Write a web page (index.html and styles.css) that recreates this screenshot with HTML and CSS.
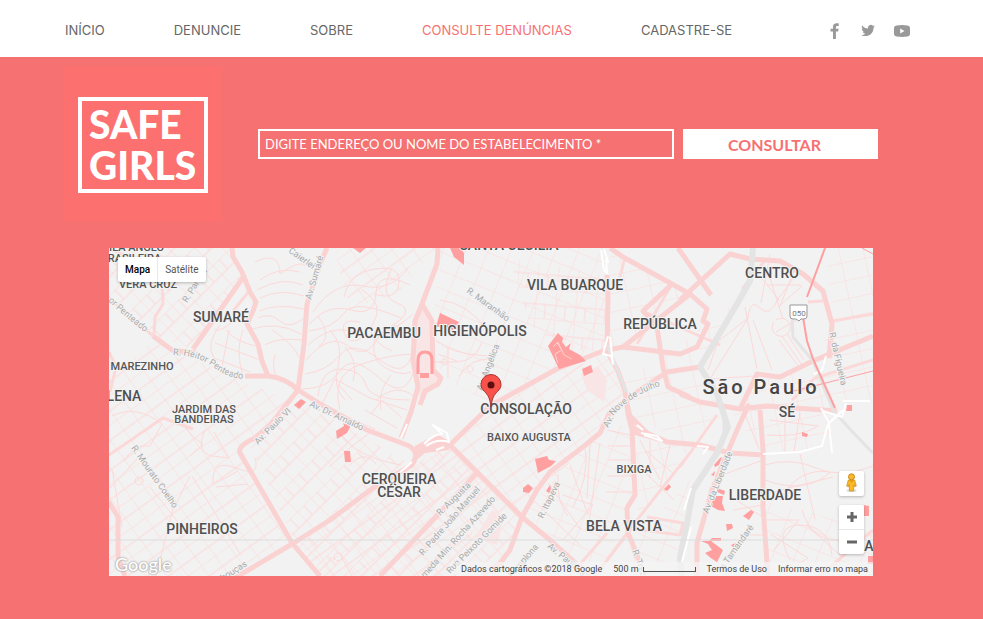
FILE: index.html
```html
<!DOCTYPE html>
<html lang="pt-BR">
<head>
<meta charset="utf-8">
<meta name="viewport" content="width=device-width, initial-scale=1">
<title>Safe Girls</title>
<link rel="stylesheet" href="styles.css">
</head>
<body>
<header class="topbar">
  <nav class="menu">
    <a href="#">INÍCIO</a>
    <a href="#">DENUNCIE</a>
    <a href="#">SOBRE</a>
    <a href="#" class="current" aria-current="page">CONSULTE DENÚNCIAS</a>
    <a href="#">CADASTRE-SE</a>
  </nav>
  <div class="social">
    <a href="#" aria-label="Facebook"><svg width="20" height="20" viewBox="0 0 20 20"><path d="M9 18v-7.500H6.500V7.800H9V6c0-2.700 1.400-3.800 3.700-3.800h2V5h-1.500c-1 0-1.300.400-1.300 1.300v1.500h2.700l-.400 2.700h-2.300V18z"/></svg></a>
    <a href="#" aria-label="Twitter"><svg width="20" height="20" viewBox="0 0 20 20"><path d="M17 5.200c-.5.250-1 .400-1.600.450.600-.350 1-.900 1.200-1.500-.550.300-1.100.500-1.750.650A2.850 2.850 0 0 0 10 7.400C7.700 7.300 5.600 6.200 4.200 4.400c-.8 1.400-.3 3 .85 3.800-.450 0-.900-.150-1.300-.350 0 1.400 1 2.500 2.300 2.800-.4.100-.85.100-1.300.05.350 1.100 1.400 1.900 2.650 1.950A5.700 5.700 0 0 1 3.200 13.900c4.600 2.900 12.300.4 12.300-7.200.600-.400 1.100-.9 1.500-1.500z"/></svg></a>
    <a href="#" aria-label="YouTube"><svg width="20" height="20" viewBox="0 0 20 20"><path fill-rule="evenodd" d="M4.500 4.500Q10 3.600 15.500 4.500 18 4.800 18 7v6q0 2.200-2.500 2.500-5.500.9-11 0Q2 15.200 2 13V7q0-2.200 2.500-2.500zM8.200 7.500v5l4.300-2.500z"/></svg></a>
  </div>
</header>

<main class="page">
  <section class="lookup">
    <a href="#" class="logo"><span class="frame">SAFE<br>GIRLS</span></a>
    <form class="search">
      <input type="text" aria-label="Endereço ou nome do estabelecimento" placeholder="DIGITE ENDEREÇO OU NOME DO ESTABELECIMENTO *">
      <button type="button">CONSULTAR</button>
    </form>
  </section>

  <section class="map" aria-label="Mapa">
    <svg class="canvas" viewBox="109 248 764 328" preserveAspectRatio="xMidYMid slice">
      <defs>
        <pattern id="gridA" width="17" height="24" patternUnits="userSpaceOnUse" patternTransform="rotate(-36)"><path d="M0 0H17M0 0V24M0 13H17"/></pattern>
        <pattern id="gridB" width="19" height="26" patternUnits="userSpaceOnUse" patternTransform="rotate(-45)"><path d="M0 0H19M0 0V26M9 0V13M0 13H19"/></pattern>
        <pattern id="gridC" width="20" height="30" patternUnits="userSpaceOnUse" patternTransform="rotate(5)"><path d="M0 0H20M0 0V30M0 16H20M10 16V30"/></pattern>
        <pattern id="gridD" width="21" height="17" patternUnits="userSpaceOnUse" patternTransform="rotate(22)"><path d="M0 0H21M0 0V17"/></pattern>
        <pattern id="gridE" width="24" height="18" patternUnits="userSpaceOnUse" patternTransform="rotate(-12)"><path d="M0 0H24M0 0V18"/></pattern>
        <path id="heitor" d="M173 355Q199 355 216 369 231 380 252 379"/>
        <path id="penteado" d="M108 301Q124 316 150 336"/>
        <path id="nove" d="M613 416Q630 395 668 383"/>
      </defs>

      <rect class="land" x="0" y="0" width="983" height="619"/>

      <g>
        <path fill="url(#gridB)" d="M109 248H230L245 276 193 349 153 336 109 298z"/>
        <path fill="url(#gridA)" d="M109 380L153 340 230 376 290 400 240 453 292 543 240 576H109z"/>
        <path fill="url(#gridA)" d="M334 248H436L400 290 350 310z"/>
        <path fill="url(#gridB)" d="M250 445L300 400 412 465 450 445 522 517 500 576H320L300 553z"/>
        <path fill="url(#gridA)" d="M300 543L412 467 450 445 500 497 440 576H320z"/>
        <path fill="url(#gridD)" d="M440 248H607V350L490 402 441 378 433 321z"/>
        <path fill="url(#gridC)" d="M510 258L606 275V350L570 350 530 325z"/>
        <path fill="url(#gridA)" d="M490 404L607 353 625 400 583 447 522 517 452 445z"/>
        <path fill="url(#gridD)" d="M522 517L583 447 630 420 635 495 600 576H590z"/>
        <path fill="url(#gridE)" d="M636 437L690 447 637 520zM610 252L690 294 640 335 608 350z"/>
        <path fill="url(#gridE)" d="M660 357L740 300 700 367 720 410 690 445 630 415 620 380z"/>
        <path fill="url(#gridE)" d="M825 248H873V400L835 405 813 361 833 321zM730 410L757 380 815 370 835 411 825 450 763 452z"/>
        <path fill="url(#gridD)" d="M640 530L690 480 680 576H610zM766 500L873 530V576H768z"/>
      </g>

      <g class="minor">
        <path d="M255 262q25-12 25 12 20-15 25-8M260 280q18-14 40-8M257 290q25-14 46-5M260 298q20-10 44-2M259 311q18-8 45-2M258 318q12-6 22 3t24-3M249 330q28-10 52 4M220 325q-15 20-6 33l36 14M238 316q-14 16-24 14M226 330q10 12 30 16M215 343l48 18M243 330q-8 20 0 46M229 330l-8 42M265 345q13-8 37-5M275 355q-4 14 3 23M272 330q20 12 29 30"/>
        <path d="M313 312q22-32 50-26t45-18M309 325q18-22 42-15t25-17 34-8M309 331q25-3 35-18t57 5M308 345q24-22 48-12t57-19M306 360q24-28 42-14t30-8 35-4M305 374q22-3 35-19t40 5 33-10M302 389q26 0 38-18t38 6 35-4M318 396q4-28 24-27t24 16 44 15M340 410q-9-35 19-45t53-11M322 404l13-25 35 19 37 12M330 330q14 15 8 36t7 34M362 290q22 14 12 31t18 30M392 268q-14 28 5 35t-4 22 20 12M377 329q-9 28 7 38t27 5M318 316q15 22 1 30M345 347q14 15 8 34M352 400l-14-16M391 375q-14 17-10 35"/>
        <path d="M344 297q5-24 31-28t24 14-25 11M360 322q-20-4-16 10t18 6"/>
        <path d="M440 300q28 3 48 31M436 340q14 14 51 16M438 354l19 7M448 347v31M433 362h25q18-2 24-20M470 366a3 3 0 1 0 .1 0M444 359a3 3 0 1 0 .1 0M459 377q10-20 35-18"/>
        <path d="M720 340l28-22q2-20 12-10t18-9l15-20M748 318l-38 61 60-4M753 320l19 50M778 307l24-21M780 301l-28-35M769 275l14 44M776 332l24-14M782 336l20 29M779 340l20 27M787 334l17 26M774 322a9 9 0 1 0 2-2M767 285h34M770 254l-9 49M796 266l-16 40M745 307l12 62M722 330l-14 40"/>
        <path d="M124 461q10-18 26-15l12-22q-26-20-50-8M110 488l29-31 36 44-19 75M122 527l-10-58M139 477a4 4 0 1 0 .1 0M150 487l28 35M178 410q9 26 25 34l-13 12M190 476l-15 30M192 476l49 79M213 484q-2-26 23-16t19-10M214 484l24-13M216 487l32-3M205 430q-10 22 7 26l17 2-15-26"/>
        <path d="M376 400q21-18 39-3M365 410l32 18M371 414l11-14 20 18M340 415l35 14q-24 16-46 38M350 465q14-16 26-1M342 435q14 22 59 30M338 553a4 4 0 1 0 .1 0M342 558l10 18M332 557l-16 19"/>
        <path d="M585 447q5 30-12 60M590 445l-3 53M600 443l-11 79M570 465l18 50M558 474q-2 28 10 42M548 483l33 47M535 502l45 43M640 440l20 40M650 440v38M670 445l-10 42M645 450l30 25M640 468l34 32M563 495l30 10-30 35M607 430l23 5M608 446h22M608 460h24M607 476h26M606 492h26"/>
        <path d="M764 465q28-8 52 3t57-2M765 480q40 15 66-8M765 494l68-17M800 454l15 65M780 500q18-33 50-28M802 510q10 35 47 30M790 560q-18-35 10-35t32 30M770 534l38 24-30 18M806 525l34 30M766 520h33l-25 30M725 474l38-14M733 510l30-5M740 535h26M736 500l30 19M745 414l14 35M770 420l49 6M767 435q30 3 50-8M785 412v40M800 412l-6 40"/>
      </g>

      <path class="block" d="M422 304L415 321 413 361 418 387 421 404 430 390 438 384 441 378 433 370 433 321zM581 374l17-8 9 14-3 22-17-12zM492 510l12 7-7 28-22-7z"/>

      <g class="mid">
        <path d="M109 298L153 336M162 282L163 304 155 317 154 334M109 352L116 367 110 392M250 290L233 311M155 270L109 248M109 455L163 418 193 429M643 311L720 345M620 277L625 257M833 321L873 314M808 302L823 301M680 467L717 415M647 517L683 523 680 535 643 530M607 533L570 576M690 453L637 520 607 560M477 473L450 445M637 344L672 284M628 533L595 576M792 400L815 378 873 360M764 262L742 289M820 576L873 530"/>
      </g>

      <g class="major">
        <path d="M232 248L233 257 242 272 250 292 256 302 253 311 247 324 258 344 262 361 268 376"/>
        <path d="M244 276L193 349"/>
        <path d="M153 336L172 350 195 353M245 376H268Q286 378 298 390L322 405 367 430 407 445Q421 451 412 465L373 488 330 520 292 544 235 578"/>
        <path d="M327 248L320 264 307 304 304 344 298 390 270 425 255 438Q237 446 240 453L292 543 320 576"/>
        <path d="M438 248L437 264 422 304 415 321 413 361 418 387 411 412 401 438"/>
        <path d="M422 304L432 321 433 370 441 378 438 384 425 391 420 405"/>
        <path d="M415 448L427 450 450 445 490 406 517 391 557 369 603 351 623 347 690 294"/>
        <path d="M450 445L522 517 550 540 590 576"/>
        <path d="M477 473L380 576"/>
        <path d="M700 367L667 372 640 390 620 405 610 412 600 433 583 447 550 472 537 490 522 517 510 550 500 563 482 575"/>
        <path d="M607 275L608 297 607 351 618 371 625 391 628 414 632 430 635 495 627 508 628 533 633 545 645 576"/>
        <path d="M628 414L647 433 667 442 700 445 730 453 763 455"/>
        <path d="M610 248L623 257 690 294 707 309 703 321 708 324 697 347 680 354 623 347M678 248L711 295"/>
        <path d="M680 300L730 254 750 259 780 261 803 274 823 291 832 324 829 358"/>
        <path d="M672 284L643 311 657 327 663 367 668 387 690 397"/>
        <path d="M680 394L700 402 740 409 757 374 780 377 813 361 873 336"/>
        <path d="M740 409L767 406 837 411M749 404L737 430 712 490 697 543 697 576M760 410L763 450 763 507 768 576"/>
        <path d="M109 502L118 517 118 557 125 576"/>
      </g>
      <path class="junction" d="M415 446L437 434 449 441 449 450 425 453 413 463zM628 398l7 28 25 16-29-8z"/>

      <g class="river">
        <path d="M753 248L750 281 737 304 700 367 717 394 728 427 717 453 693 490 687 523 680 557 682 576"/>
        <path class="thin" d="M792 317L793 337 813 361 833 410Q850 430 873 453"/>
        <path class="thin" d="M724 412v20M607 345L618 371 626 392"/>
      </g>
      <g class="ramp">
        <path d="M601 250l3 20 3 3-1-13 2 2-4-13M608 336l-5 18 8 2 2 8-3-27M398 474l14-12M401 438l6-14M763 454l37-2 22-6 6-22 15-14M821 408l8 15 3 30M823 411l19 6 4-14M697 446l11 1-5 7M826 356l-4 14-8 4M843 401l27 0M637 425l6 5M641 433l16 3 5 5-18-6M684 510l7-22M682 562l9-35"/>
        <path d="M424 444q10-10 18-10l-9-9 14 8 2 9q-12-4-23 4M436 450l8-3"/>
      </g>
      <path class="highway" d="M825 248L807 297M803 317L807 341 813 359 835 408"/>
      <path class="highway thin" d="M794 391L873 371M862 248L873 254"/>

      <g class="park">
        <path d="M353 248h13l-6 5zM450 248h10l4 5v12l-10-8zM440 313l19 9-6 8q-8-4-17-3zM548 346l10-13 5 5-1 4 4 5 5-4-2 6 11 6 6 6-14 4-13 4zM582 369l9-4 2 7-9 4zM294 405l7-6 5 3-7 7zM336 431l8-5-1-4h7v5l-3 6-10 6zM344 451h6l1 11h-6zM535 459l12-3 2 4 7 1-5 5-13 7zM523 488l5-4 5 4-4 5-6-1zM546 491l4-6 2 7-3 1zM664 489l5-5 2 3-4 4-2-1zM802 432l6 2-1 3-5-1zM847 405h5v6h-6zM714 465l6-7 2-1-3 8-4 2zM711 475l4-4-1 5zM717 488l8 3-1 4-7-3zM711 506l3-10h9l-1 7 3 8-7-1zM743 516l8-6 3 2-5 8zM726 524h6l1 4-6 3zM701 541h8l3-3h9v3h-10l12 9-6 12q-7-4-12-9l7-3-4-6zM731 545l5-2-2 5zM864 505l5 1v10h-5zM868 556h5v8h-5z"/>
        <path class="stadium" d="M418 374V360q0-8 7-8t7 8V374"/>
        <path d="M420 373h9v5h-9z"/>
        <path class="lane" d="M553 347l5-5 6 13 8 4M557 343l5 7-7 4 3 9"/>
      </g>
      <path class="tile" d="M109 540H873"/>

      <g class="street">
        <text><textPath href="#heitor">R. Heitor Penteado</textPath></text>
        <text><textPath href="#penteado">or Penteado</textPath></text>
        <text><textPath href="#nove">Nove de Julho</textPath></text>
        <text transform="translate(187 303) rotate(-58)">R. Paraná</text>
        <text transform="translate(311 300) rotate(-74)">Av. Sumaré</text>
        <text transform="translate(288 252) rotate(35)">Caierlei</text>
        <text transform="translate(466 292) rotate(36)">R. Maranhão</text>
        <text transform="translate(482 391) rotate(-69)">Av. Angélica</text>
        <text transform="translate(829 333) rotate(77)">R. da Figueira</text>
        <text transform="translate(131 448) rotate(55)">R. Mourato Coelho</text>
        <text transform="translate(258 445) rotate(-45)">Av. Paulo VI</text>
        <text transform="translate(309 406) rotate(25)">Av. Dr. Arnaldo</text>
        <text transform="translate(440 516) rotate(-44)">R. Augusta</text>
        <text transform="translate(423 556) rotate(-49)">R. Padre João Manuel</text>
        <text transform="translate(416 588) rotate(-48)">Alameda Min. Rocha Azevedo</text>
        <text transform="translate(450 574) rotate(-45)">Rua Peixoto Gomide</text>
        <text transform="translate(543 519) rotate(-64)">R. Itapeva</text>
        <text transform="translate(512 578) rotate(-49)">Pamplona</text>
        <text transform="translate(547 547) rotate(40)">Av. Paulista</text>
        <text transform="translate(608 428) rotate(-62)">Av.</text>
        <text transform="translate(632 551) rotate(70)">R. Treze</text>
        <text transform="translate(708 514) rotate(-68)">Av. da Liberdade</text>
        <text transform="translate(724 570) rotate(-55)">a Tamandaré</text>
        <text transform="translate(202 594) rotate(-32)">Av. Rebouças</text>
      </g>

      <g class="shield"><path d="M790 305h17v11q0 3-3 3h-3l-2 2-3-2h-3q-3 0-3-3z"/><text x="799" y="316">050</text></g>

      <g class="area">
        <text x="133" y="251">VILA ANGLO</text>
        <text x="131" y="262">BRASILEIRA</text>
        <text x="148" y="288">VERA CRUZ</text>
        <text x="142" y="370">MAREZINHO</text>
        <text x="204" y="413">JARDIM DAS</text>
        <text x="204" y="423">BANDEIRAS</text>
        <text x="529" y="441">BAIXO AUGUSTA</text>
        <text x="634" y="473">BIXIGA</text>
      </g>
      <g class="district">
        <text x="509" y="250">SANTA CECÍLIA</text>
        <text x="221" y="322">SUMARÉ</text>
        <text x="384" y="338">PACAEMBU</text>
        <text x="480" y="336">HIGIENÓPOLIS</text>
        <text x="575" y="290">VILA BUARQUE</text>
        <text x="660" y="329">REPÚBLICA</text>
        <text x="772" y="278">CENTRO</text>
        <text x="124" y="401">LENA</text>
        <text x="526" y="414">CONSOLAÇÃO</text>
        <text x="787" y="417">SÉ</text>
        <text x="399" y="484">CERQUEIRA</text>
        <text x="399" y="497">CÉSAR</text>
        <text x="202" y="534">PINHEIROS</text>
        <text x="624" y="531">BELA VISTA</text>
        <text x="765" y="500">LIBERDADE</text>
        <text x="869" y="551">A</text>
      </g>
      <text class="city" x="761" y="394">São Paulo</text>

      <g class="pin"><path d="M491 407C490 398 488 395 484.500 391.500 482 389 481 387 481 384.500a10 10 0 0 1 20 0C501 387 500 389 497.500 391.500 494 395 492 398 491 407z"/><circle cx="491" cy="385" r="3.500"/></g>
    </svg>

    <div class="maptype">
      <button type="button" class="on">Mapa</button>
      <button type="button">Satélite</button>
    </div>

    <div class="controls">
      <button type="button" class="pegman" aria-label="Street View"><svg width="25" height="25" viewBox="0 0 25 25"><ellipse cx="12.500" cy="19.500" rx="5" ry="1.500" fill="#ddd"/><circle cx="12.500" cy="5.800" r="3" fill="#fbb829" stroke="#c98a1b"/><path d="M9.300 9h6.400l1.600 6-1.600.7-.7-2-.5 6.300h-4l-.5-6.300-.7 2-1.600-.7z" fill="#fbb829" stroke="#c98a1b" stroke-width=".7"/><path d="M10 9l2.500 3L15 9z" fill="#e79a16"/></svg></button>
      <div class="zoom">
        <button type="button" aria-label="Aumentar o zoom"><svg width="25" height="24" viewBox="0 0 25 24"><path d="M8 12h10M13 7v10"/></svg></button>
        <button type="button" aria-label="Diminuir o zoom"><svg width="25" height="24" viewBox="0 0 25 24"><path d="M8 12h10"/></svg></button>
      </div>
    </div>

    <span class="brand">Google</span>
    <footer class="credits">
      <span>Dados cartográficos ©2018 Google</span>
      <span class="scale">500 m <i></i></span>
      <a href="#">Termos de Uso</a>
      <a href="#">Informar erro no mapa</a>
    </footer>
  </section>
</main>
</body>
</html>
```

FILE: styles.css
```css
* { box-sizing: border-box; }

body {
  margin: 0;
  min-height: 100vh;
  display: flex;
  flex-direction: column;
  background: #f67171;
  font-family: Lato, sans-serif;
}

a { color: inherit; text-decoration: none; }
button { border: 0; padding: 0; font: inherit; cursor: pointer; }

.topbar {
  display: flex;
  align-items: center;
  justify-content: space-between;
  min-height: 57px;
  padding: 4px 71px 0 65px;
  background: #fff;
}
.menu {
  display: flex;
  gap: 69px;
  padding-bottom: 2px;
  color: #666;
  font: 400 13px/20px Inter, sans-serif;
  white-space: nowrap;
}
.menu .current { color: #f67171; }
.social { display: flex; gap: 14px; }
.social svg { display: block; fill: #999; }

.page { flex: 1; padding-bottom: 43px; }

.lookup {
  display: flex;
  align-items: center;
  gap: 36px;
  padding: 9px 105px 0 64px;
}
.logo {
  flex: none;
  padding: 31px 14px 29px;
  background: #fd7070;
}
.frame {
  display: block;
  width: 130px;
  padding: 3px 0 3px 7px;
  border: 4px solid #fff;
  color: #fff;
  font: 900 39px/41px Lato, sans-serif;
}
.search { flex: 1; display: flex; gap: 9px; }
.search input {
  flex: 1;
  min-width: 0;
  height: 30px;
  padding: 0 5px;
  border: 2px solid #fff;
  border-radius: 0;
  background: transparent;
  color: #fff;
  font: 13px Lato, sans-serif;
}
.search input::placeholder { color: #fff; opacity: 1; }
.search button {
  width: 195px;
  padding-right: 12px;
  background: #fff;
  color: #f67171;
  font: 700 16px Lato, sans-serif;
}

.map {
  position: relative;
  height: 328px;
  margin: 26px 110px 0 109px;
  overflow: hidden;
  background: #f2f2f2;
  font-family: Roboto, sans-serif;
}
.canvas { display: block; width: 100%; height: 100%; }
.canvas path { stroke-linejoin: round; }
.land { fill: #f2f2f2; }
pattern path, .minor path { fill: none; stroke: #fdd9d9; stroke-width: 1; }
.block { fill: #f9e5e5; }
.mid path { fill: none; stroke: #fcd9d9; stroke-width: 3; }
.major path { fill: none; stroke: #fbd2d2; stroke-width: 5; }
.junction { fill: #fbd2d2; }
.river path { fill: none; stroke: #e4e4e4; stroke-width: 6; }
.river .thin { stroke-width: 3; }
.ramp path { fill: none; stroke: #fff; stroke-width: 2; }
.highway { fill: none; stroke: #ff9f9f; stroke-width: 2; }
.highway.thin { stroke-width: 1; }
.park path { fill: #ff9f9f; }
.park .stadium { fill: none; stroke: #ff9f9f; stroke-width: 3; }
.park .lane { fill: none; stroke: #fcd0d0; }
.tile { stroke: #ddd; }

.canvas text { paint-order: stroke; stroke: #f3f3f3; stroke-width: 2px; }
.street { fill: #aaa; font-size: 9px; }
.area { fill: #555; font-size: 11px; font-weight: 500; text-anchor: middle; }
.district { fill: #505050; font-size: 14px; font-weight: 500; text-anchor: middle; }
.city { fill: #444; font-size: 20px; font-weight: 500; letter-spacing: 3px; text-anchor: middle; }
.shield path { fill: #fff; stroke: #999; }
.canvas .shield text { fill: #777; stroke: none; font-size: 8px; text-anchor: middle; }
.pin path { fill: #f8524a; stroke: #a8322d; }
.pin circle { fill: #5a1010; }

.maptype {
  position: absolute;
  top: 9px;
  left: 9px;
  display: flex;
  border-radius: 2px;
  background: #fff;
  box-shadow: 0 1px 3px rgba(0, 0, 0, .25);
}
.maptype button {
  height: 25px;
  padding: 0 7px;
  background: none;
  color: #555;
  font-size: 10px;
}
.maptype .on { border-right: 1px solid #e8e8e8; color: #000; font-weight: 500; }

.controls {
  position: absolute;
  right: 9px;
  bottom: 22px;
  display: grid;
  gap: 9px;
}
.controls svg { display: block; }
.pegman, .zoom {
  border-radius: 2px;
  background: #fff;
  box-shadow: 0 1px 3px rgba(0, 0, 0, .25);
}
.zoom button { display: block; background: none; }
.zoom button + button { border-top: 1px solid #e6e6e6; }
.zoom path { stroke: #666; stroke-width: 3; }

.brand {
  position: absolute;
  left: 6px;
  bottom: 1px;
  color: #fff;
  font: 500 18px/22px Lato, sans-serif;
  text-shadow: 0 0 2px #999, 0 0 2px #aaa;
}
.credits {
  position: absolute;
  right: 0;
  bottom: 0;
  display: flex;
  gap: 11px;
  padding: 0 5px;
  background: rgba(245, 245, 245, .7);
  color: #444;
  font-size: 9px;
  line-height: 14px;
  white-space: nowrap;
}
.scale { display: flex; gap: 4px; }
.scale i {
  align-self: center;
  width: 53px;
  height: 5px;
  border: 1px solid #555;
  border-top: 0;
}
```
